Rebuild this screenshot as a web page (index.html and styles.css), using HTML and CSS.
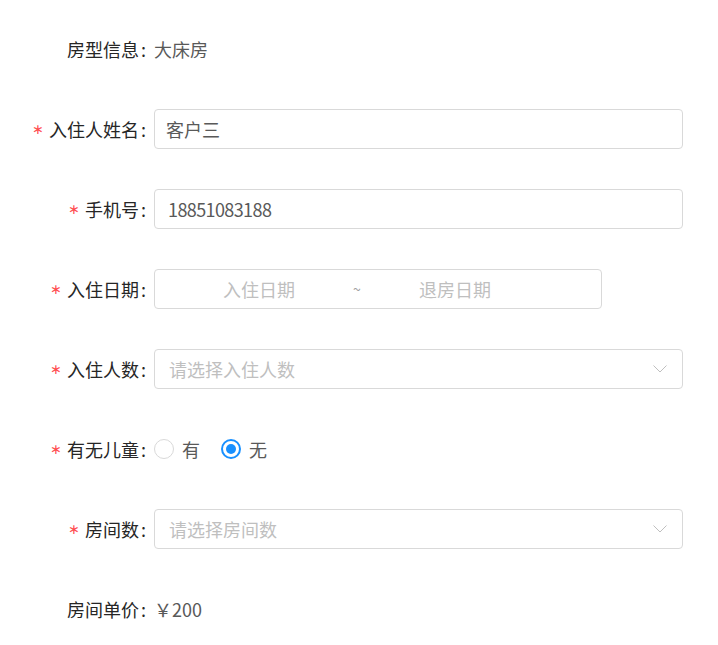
FILE: index.html
```html
<!DOCTYPE html>
<html lang="zh-CN">
<head>
<meta charset="utf-8">
<title>预订表单</title>
<link rel="stylesheet" href="styles.css">
</head>
<body>
<form class="form">
  <div class="row">
    <div class="label"><span class="text">房型信息</span></div>
    <div class="control"><span class="value">大床房</span></div>
  </div>
  <div class="row">
    <div class="label"><span class="req">∗</span><span class="text">入住人姓名</span></div>
    <div class="control"><div class="input">客户三</div></div>
  </div>
  <div class="row">
    <div class="label"><span class="req">∗</span><span class="text">手机号</span></div>
    <div class="control"><div class="input"><span class="digits">18851083188</span></div></div>
  </div>
  <div class="row">
    <div class="label"><span class="req">∗</span><span class="text">入住日期</span></div>
    <div class="control">
      <div class="range">
        <span class="range-input">入住日期</span>
        <span class="range-sep">~</span>
        <span class="range-input">退房日期</span>
      </div>
    </div>
  </div>
  <div class="row">
    <div class="label"><span class="req">∗</span><span class="text">入住人数</span></div>
    <div class="control">
      <div class="select">
        <span class="placeholder">请选择入住人数</span>
        <svg class="arrow" width="14" height="8" viewBox="0 0 14 8"><path d="M0.5 0.5 L7 7 L13.5 0.5" fill="none" stroke="#bfbfbf" stroke-width="1"/></svg>
      </div>
    </div>
  </div>
  <div class="row">
    <div class="label"><span class="req">∗</span><span class="text">有无儿童</span></div>
    <div class="control radios">
      <label class="radio"><span class="circle"></span><span class="radio-text">有</span></label>
      <label class="radio"><span class="circle checked"></span><span class="radio-text">无</span></label>
    </div>
  </div>
  <div class="row">
    <div class="label"><span class="req">∗</span><span class="text">房间数</span></div>
    <div class="control">
      <div class="select">
        <span class="placeholder">请选择房间数</span>
        <svg class="arrow" width="14" height="8" viewBox="0 0 14 8"><path d="M0.5 0.5 L7 7 L13.5 0.5" fill="none" stroke="#bfbfbf" stroke-width="1"/></svg>
      </div>
    </div>
  </div>
  <div class="row">
    <div class="label"><span class="text">房间单价</span></div>
    <div class="control"><span class="value">￥200</span></div>
  </div>
</form>
</body>
</html>
```

FILE: styles.css
```css
html, body {
  margin: 0;
  padding: 0;
  background: #fff;
}

body {
  font-family: "Noto Sans CJK SC", "Noto Sans", sans-serif;
  font-size: 18px;
  color: #262626;
}

.form {
  padding-top: 29px;
}

.row {
  display: flex;
  align-items: center;
  height: 40px;
  margin-bottom: 40px;
}

.label {
  width: 154px;
  flex: none;
  display: flex;
  justify-content: flex-end;
  align-items: center;
  line-height: 40px;
}

.req {
  color: #ff4d4f;
  font-family: "DejaVu Sans", sans-serif;
  font-size: 14px;
  margin-right: 5px;
}

.text::after {
  content: ":";
  margin: 0 8px 0 2px;
}

.control {
  width: 529px;
  flex: none;
  display: flex;
  align-items: center;
}

.value {
  color: #595959;
}

.input,
.select,
.range {
  box-sizing: border-box;
  height: 40px;
  border: 1px solid #d9d9d9;
  border-radius: 4px;
  display: flex;
  align-items: center;
}

.input {
  width: 100%;
  padding: 0 11px;
  color: #595959;
}

.digits {
  letter-spacing: -0.6px;
  padding-left: 2px;
}

.select {
  width: 100%;
  padding: 0 15px 0 14px;
  justify-content: space-between;
}

.placeholder {
  color: #bfbfbf;
}

.range {
  width: 448px;
  padding: 0 11px;
}

.range-input {
  width: 186px;
  flex: none;
  text-align: center;
  color: #bfbfbf;
}

.range-sep {
  width: 10px;
  flex: none;
  text-align: center;
  color: #a0a0a0;
  font-size: 14px;
}

.radio {
  display: flex;
  align-items: center;
  margin-right: 13px;
}

.circle {
  box-sizing: border-box;
  width: 20px;
  height: 20px;
  border: 1px solid #d9d9d9;
  border-radius: 50%;
  display: flex;
  align-items: center;
  justify-content: center;
}

.circle.checked {
  border: 2px solid #1890ff;
}

.circle.checked::after {
  content: "";
  width: 10px;
  height: 10px;
  border-radius: 50%;
  background: #1890ff;
}

.radio-text {
  padding: 0 8px;
  color: #595959;
}
```
